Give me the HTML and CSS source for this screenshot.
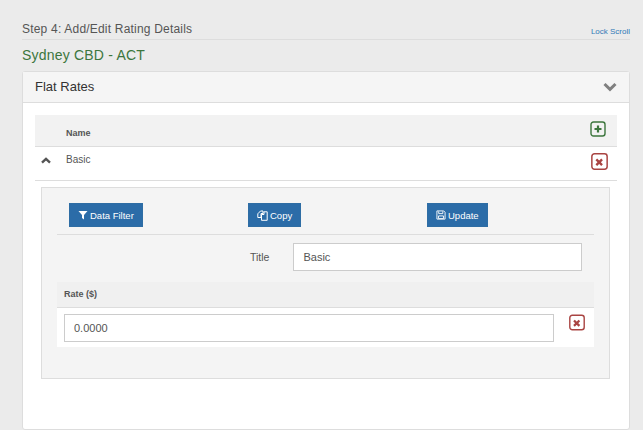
FILE: index.html
```html
<!DOCTYPE html>
<html lang="en">
<head>
<meta charset="utf-8">
<title>Rating Details</title>
<link rel="stylesheet" href="styles.css">
</head>
<body>
<main class="page">
  <header class="step-head">
    <h1 class="step-title">Step 4: Add/Edit Rating Details</h1>
    <a class="lock-link" href="#">Lock Scroll</a>
  </header>
  <h2 class="location">Sydney CBD - ACT</h2>
  <section class="panel">
    <div class="panel-head">
      <h3 class="panel-title">Flat Rates</h3>
      <svg class="panel-chevron" viewBox="0 0 14 10" aria-hidden="true"><path d="M1.500 2 7 7.400 12.500 2" fill="none" stroke="#808080" stroke-width="3"/></svg>
    </div>
    <div class="panel-body">
      <div class="list-head">
        <span class="col-name">Name</span>
        <button class="icon-box icon-add" type="button" aria-label="Add">
          <svg viewBox="0 0 16 16" aria-hidden="true"><rect x="1" y="1" width="14" height="14" rx="2.500" fill="none" stroke="#3c763d" stroke-width="1.400"/><path d="M8 4.500v7M4.500 8h7" stroke="#3c763d" stroke-width="2.200"/></svg>
        </button>
      </div>
      <div class="list-row">
        <svg class="row-chevron" viewBox="0 0 10 7" aria-hidden="true"><path d="M1 5.600 5 1.800 9 5.600" fill="none" stroke="#555" stroke-width="2.400"/></svg>
        <span class="row-name">Basic</span>
        <button class="icon-box icon-del" type="button" aria-label="Delete">
          <svg viewBox="0 0 16 16" aria-hidden="true"><rect x="0.800" y="0.800" width="14.400" height="14.400" rx="2.500" fill="none" stroke="#a94442" stroke-width="1.400"/><path d="M5 6l5.400 5.400M10.400 6 5 11.400" stroke="#a94442" stroke-width="2.200"/></svg>
        </button>
      </div>
      <div class="well">
        <div class="actions">
          <div class="action-cell">
            <button class="btn" type="button">
              <svg viewBox="0 0 10 10" aria-hidden="true"><path d="M0.500 1h9L6 5v4.500L4 8V5z" fill="#fff"/></svg>Data Filter
            </button>
          </div>
          <div class="action-cell">
            <button class="btn" type="button">
              <svg class="icon-wide" viewBox="0 0 11 11" aria-hidden="true"><path d="M3.500 1h2.500v2.500H4v4H0.800V3.800zM4.500 4.500h2.500V1.800h3.200v8.500H4.500z" fill="none" stroke="#fff" stroke-width="1"/></svg>Copy
            </button>
          </div>
          <div class="action-cell">
            <button class="btn" type="button">
              <svg viewBox="0 0 11 11" aria-hidden="true"><path d="M1 1h7.500L10 2.500V10H1zM3 1.500V4h4.500V1.500M2.800 6.500h5.400V9.500H2.800z" fill="none" stroke="#fff" stroke-width="1"/></svg>Update
            </button>
          </div>
        </div>
        <div class="title-row">
          <label class="field-label" for="title">Title</label>
          <input class="field title-input" id="title" type="text" value="Basic">
        </div>
        <div class="rate-head">Rate ($)</div>
        <div class="rate-row">
          <input class="field rate-input" type="text" value="0.0000" aria-label="Rate">
          <button class="icon-box icon-del rate-del" type="button" aria-label="Delete rate">
            <svg viewBox="0 0 16 16" aria-hidden="true"><rect x="0.800" y="0.800" width="14.400" height="14.400" rx="2.500" fill="none" stroke="#a94442" stroke-width="1.400"/><path d="M5 6l5.400 5.400M10.400 6 5 11.400" stroke="#a94442" stroke-width="2.200"/></svg>
          </button>
        </div>
      </div>
    </div>
  </section>
</main>
</body>
</html>
```

FILE: styles.css
```css
* { box-sizing: border-box; }
html, body { margin: 0; height: 100%; overflow: hidden; }
body {
  background: #ebebeb;
  color: #555;
  font-family: "Liberation Sans", Arial, sans-serif;
  font-size: 12px;
}
.page { padding: 20px 13px 0 22px; }
.step-head {
  display: flex;
  justify-content: space-between;
  align-items: flex-end;
  height: 20px;
  border-bottom: 1px solid #ddd;
  padding-bottom: 2px;
}
.step-title { margin: 0; font-size: 12px; font-weight: 400; color: #555; letter-spacing: 0.2px; line-height: 16px; }
.lock-link { font-size: 8px; color: #337ab7; text-decoration: none; line-height: 11px; }
.location { margin: 7px 0 0; height: 24px; font-size: 14px; font-weight: 400; color: #3c763d; line-height: 17px; letter-spacing: 0.2px; }
.panel {
  width: 608px;
  height: 359px;
  background: #fff;
  border: 1px solid #ddd;
  border-radius: 3px;
}
.panel-head {
  display: flex;
  justify-content: space-between;
  align-items: center;
  height: 31px;
  padding: 0 12px 1px;
  background: #f5f5f5;
  border-bottom: 1px solid #ddd;
}
.panel-title { margin: 0; font-size: 13px; font-weight: 400; color: #333; }
.panel-chevron { width: 14px; height: 10px; }
.panel-body { padding: 12px 12px 0; }
.list-head {
  display: flex;
  align-items: center;
  justify-content: space-between;
  height: 32px;
  padding: 0 11px 0 31px;
  background: #f2f2f2;
  border-bottom: 1px solid #ddd;
}
.col-name { font-size: 9px; font-weight: 700; color: #555; padding-top: 4px; }
.icon-box { display: block; padding: 0; border: 0; background: none; }
.icon-box svg { display: block; width: 100%; height: 100%; }
.icon-add { width: 16px; height: 16px; margin-top: -4px; }
.list-row {
  display: flex;
  align-items: center;
  height: 34px;
  padding: 0 9px 8px 6px;
  border-bottom: 1px solid #ddd;
}
.row-chevron { width: 10px; height: 7px; flex: none; margin-top: 2px; }
.row-name { flex: 1; margin-left: 15px; font-size: 10px; color: #555; }
.icon-del { width: 17px; height: 17px; margin-top: 4px; }
.well {
  width: 569px;
  height: 192px;
  margin: 6px 0 0 6px;
  padding: 15px 15px 0;
  background: #f4f4f4;
  border: 1px solid #ddd;
}
.actions {
  display: grid;
  grid-template-columns: repeat(3, 179px);
  height: 32px;
  border-bottom: 1px solid #ddd;
}
.action-cell { padding-left: 12px; }
.btn {
  display: inline-flex;
  align-items: center;
  gap: 2px;
  height: 24px;
  padding: 0 8px;
  background: #2b6ca8;
  border: 1px solid #2e6da4;
  color: #fff;
  font-family: "Liberation Sans", Arial, sans-serif;
  font-size: 9.500px;
}
.btn svg { width: 10px; height: 10px; flex: none; }
.btn .icon-wide { width: 11px; height: 11px; }
.field {
  display: block;
  height: 28px;
  border: 1px solid #ccc;
  background: #fff;
  color: #555;
  padding: 0 9px;
  font-family: "Liberation Sans", Arial, sans-serif;
  font-size: 11px;
  outline: none;
}
.title-row {
  display: flex;
  align-items: center;
  gap: 24px;
  height: 47px;
  padding: 8px 12px 11px 193px;
}
.field-label { font-size: 10.500px; color: #555; }
.title-input { flex: 1; min-width: 0; }
.rate-head {
  height: 26px;
  padding: 6px 7px 0;
  background: #f0f0f0;
  border-bottom: 1px solid #ddd;
  font-size: 9px;
  font-weight: 700;
  color: #555;
  line-height: 12px;
}
.rate-row {
  display: flex;
  align-items: flex-start;
  height: 39px;
  padding: 6px 0 0 7px;
  background: #fff;
}
.rate-input { width: 490px; }
.rate-del { width: 16px; height: 17px; margin: 0 0 0 15px; }
```
